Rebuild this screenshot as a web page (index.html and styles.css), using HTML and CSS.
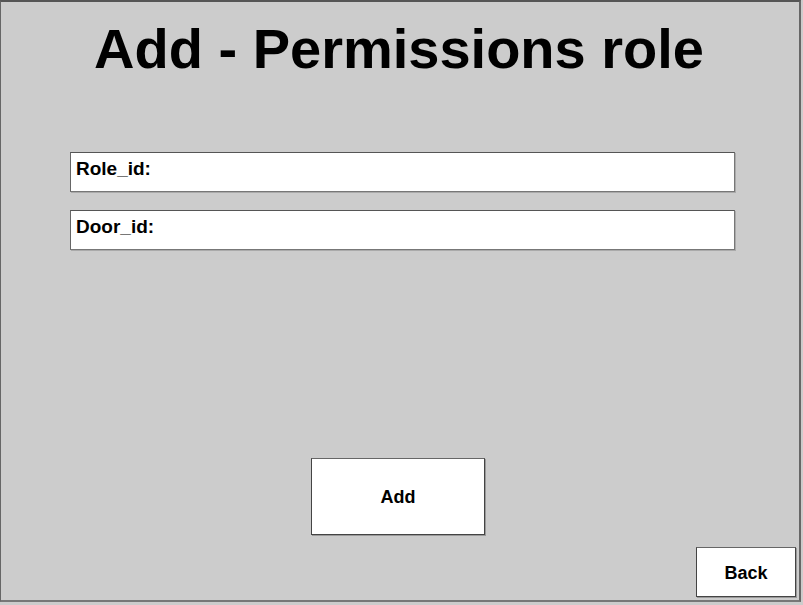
FILE: index.html
```html
<!DOCTYPE html>
<html>
<head>
<meta charset="utf-8">
<link rel="stylesheet" href="styles.css">
</head>
<body>
<div class="frame">
  <h1 class="title">Add - Permissions role</h1>
  <div class="fields">
    <div class="field">Role_id:</div>
    <div class="field">Door_id:</div>
  </div>
  <div class="add-row">
    <div class="btn add-btn">Add</div>
  </div>
  <div class="back-row">
    <div class="btn back-btn">Back</div>
  </div>
</div>
</body>
</html>
```
FILE: styles.css
```css
html, body {
  margin: 0;
  padding: 0;
  background: #cccccc;
}
body {
  width: 803px;
  height: 605px;
  overflow: hidden;
  font-family: "Liberation Sans", Arial, sans-serif;
  color: #000;
}
.frame {
  box-sizing: border-box;
  width: 801px;
  height: 602px;
  border-top: 2px solid #555555;
  border-left: 1px solid #666666;
  border-right: 2px solid #666666;
  border-bottom: 2px solid #777777;
  display: flex;
  flex-direction: column;
}
.title {
  margin: 15px 0 0 0;
  font-size: 56px;
  font-weight: bold;
  line-height: 64px;
  text-align: center;
  padding-right: 2px;
}
.fields {
  margin-top: 71px;
  margin-left: 69px;
  display: flex;
  flex-direction: column;
  gap: 18px;
}
.field {
  box-sizing: border-box;
  width: 665px;
  height: 40px;
  background: #ffffff;
  border: 1px solid #777777;
  border-top-color: #555555;
  border-left-color: #666666;
  box-shadow: 1px 1px 0 #aaaaaa;
  font-size: 19px;
  font-weight: bold;
  line-height: 22px;
  padding: 5px 0 0 5px;
}
.add-row {
  margin-top: 208px;
  display: flex;
  padding-left: 310px;
}
.btn {
  box-sizing: border-box;
  background: #ffffff;
  border: 1px solid #444444;
  border-top-color: #666666;
  box-shadow: 1px 1px 0 #999999;
  display: flex;
  align-items: center;
  justify-content: center;
  font-size: 18px;
  font-weight: bold;
  padding-top: 2px;
}
.add-btn {
  width: 174px;
  height: 77px;
}
.back-row {
  margin-top: 12px;
  display: flex;
  justify-content: flex-end;
  padding-right: 3px;
}
.back-btn {
  width: 100px;
  height: 50px;
}
```
